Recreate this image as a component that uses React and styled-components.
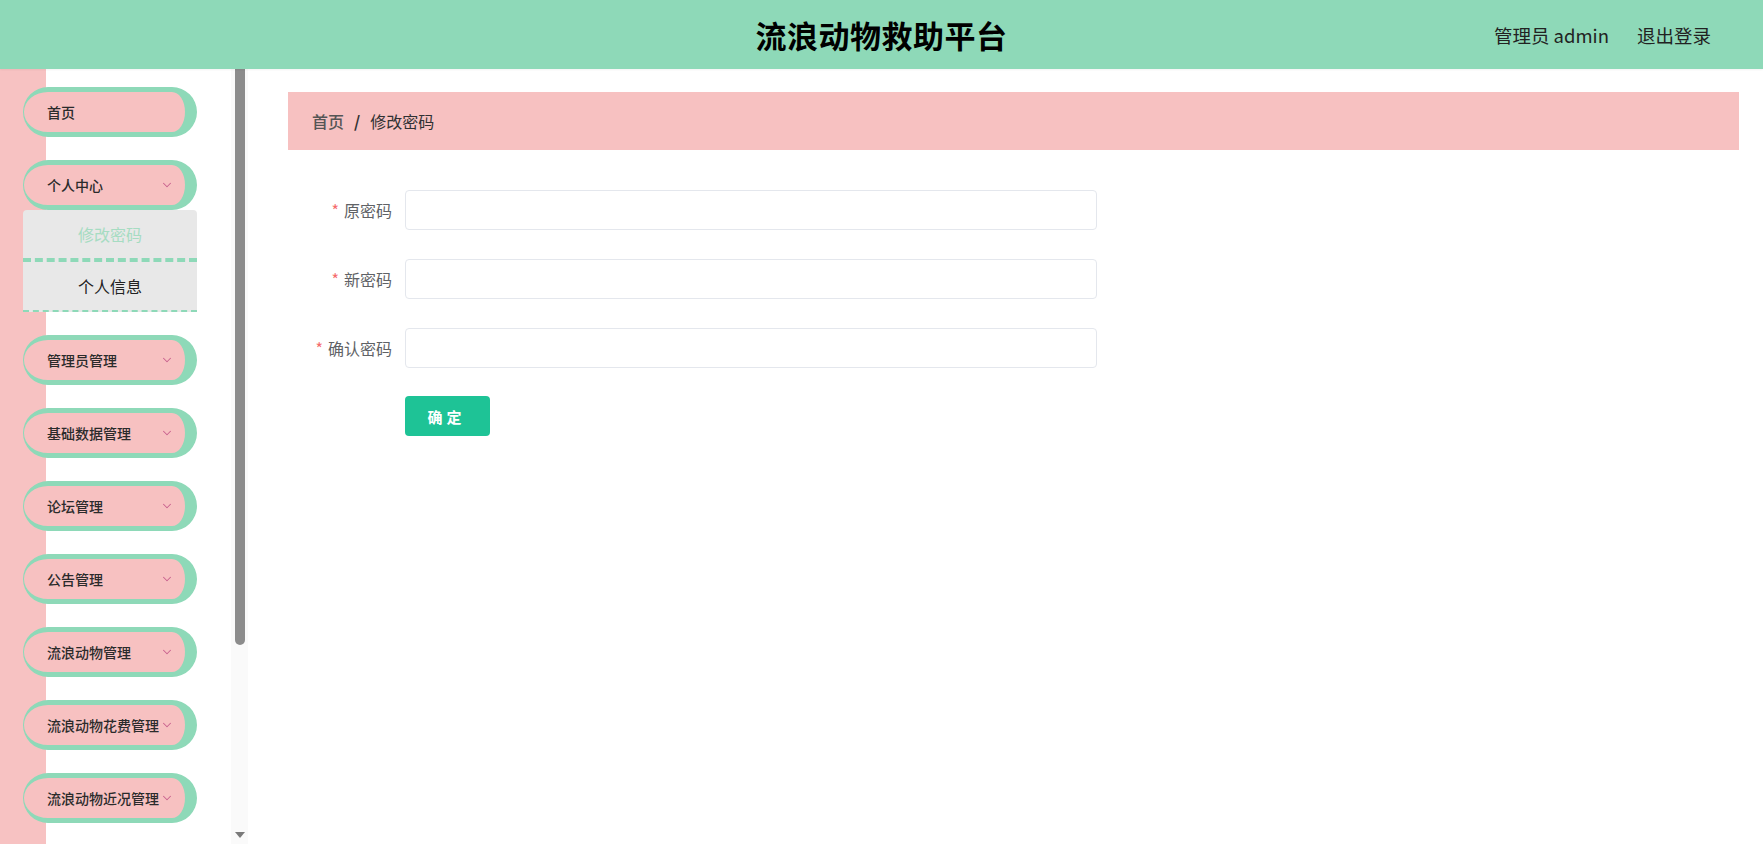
import React from 'react';
import styled, { createGlobalStyle } from 'styled-components';
import { ChevronDown } from 'lucide-react';

const GlobalStyle = createGlobalStyle`
    html, body {
        margin: 0;
        padding: 0;
        height: 100%;
        overflow: hidden;
    }
    body {
        font-family: "Noto Sans CJK SC", "Noto Sans", sans-serif;
        background: #fff;
        color: #303133;
    }
    * {
        box-sizing: border-box;
    }
`;

const Page = styled.div`
    display: flex;
    flex-direction: column;
    height: 100vh;
`;

const Header = styled.header`
    height: 69px;
    flex: 0 0 69px;
    background: #8ed9b8;
    display: flex;
    align-items: center;
    justify-content: center;
    position: relative;
    box-shadow: 0 1px 2px rgba(0, 0, 0, 0.05);
`;

const Title = styled.h1`
    margin: 0;
    font-size: 31px;
    font-weight: 700;
    color: #000;
    letter-spacing: 0.5px;
`;

const UserBox = styled.div`
    position: absolute;
    right: 52px;
    top: 0;
    height: 100%;
    display: flex;
    align-items: center;
    gap: 28px;
    font-size: 18.5px;
    color: #222;
`;

const Body = styled.div`
    flex: 1;
    display: flex;
    min-height: 0;
`;

const Sidebar = styled.aside`
    width: 248px;
    flex: 0 0 248px;
    height: 100%;
    display: flex;
`;

const MenuScroll = styled.div`
    flex: 1;
    height: 100%;
    overflow: hidden;
    background: linear-gradient(to right, #f7c2c2 46px, #fff 46px);
`;

const ScrollTrack = styled.div`
    width: 17px;
    flex: 0 0 17px;
    height: 100%;
    background: #fafafa;
    display: flex;
    flex-direction: column;
    align-items: center;
    padding-bottom: 6px;
`;

const Thumb = styled.div`
    width: 10px;
    height: 576px;
    background: #8c8c8c;
    border-radius: 0 0 5px 5px;
`;

const Spacer = styled.div`
    flex: 1;
`;

const ArrowDown = styled.div`
    width: 0;
    height: 0;
    border-left: 5px solid transparent;
    border-right: 5px solid transparent;
    border-top: 6px solid #7a7a7a;
`;

const Menu = styled.ul`
    list-style: none;
    margin: 0;
    padding: 18px 0 0 23px;
    display: flex;
    flex-direction: column;
    gap: 23px;
`;

const MenuItem = styled.li`
    width: 174px;
`;

const Pill = styled.div`
    height: 50px;
    display: flex;
    align-items: center;
    justify-content: space-between;
    padding: 0 11px 0 23px;
    background: #f7c1c1;
    border: 5px solid #8ed9b8;
    border-left-width: 1px;
    border-right-width: 12px;
    border-radius: 25px;
    font-size: 14px;
    font-weight: 500;
    color: #2b2b2b;
    white-space: nowrap;
    cursor: pointer;
    svg {
        color: #c9638f;
        flex: 0 0 auto;
    }
`;

const SubMenu = styled.div`
    background: #e8e8e8;
    border-radius: 4px 4px 0 0;
`;

const SubItem = styled.div`
    height: ${p => (p.active ? '52px' : '50px')};
    display: flex;
    align-items: center;
    justify-content: center;
    font-size: 16px;
    color: ${p => (p.active ? '#a6dcc2' : '#222')};
    border-bottom: ${p => (p.active ? '4px' : '2px')} dashed #8ed9b8;
    cursor: pointer;
`;

const Main = styled.main`
    flex: 1;
    padding: 23px 24px 0 40px;
    min-width: 0;
`;

const Breadcrumb = styled.div`
    height: 58px;
    background: #f7c1c1;
    display: flex;
    align-items: center;
    padding-left: 24px;
    font-size: 16px;
    color: #303133;
`;

const Crumb = styled.span`
    color: ${p => (p.muted ? '#555' : '#303133')};
    font-weight: ${p => (p.muted ? 500 : 400)};
`;

const Sep = styled.span`
    margin: 0 10px;
    color: #333;
    font-weight: 600;
`;

const Form = styled.form`
    margin-top: 40px;
    display: flex;
    flex-direction: column;
    gap: 29px;
`;

const Row = styled.div`
    display: flex;
    align-items: center;
`;

const Label = styled.label`
    width: 117px;
    padding-right: 13px;
    text-align: right;
    font-size: 16px;
    color: #606266;
    &::before {
        content: '*';
        color: #f56c6c;
        margin-right: 5px;
    }
`;

const Input = styled.input`
    width: 692px;
    height: 40px;
    border: 1px solid #e4e7ed;
    border-radius: 4px;
    padding: 0 14px;
    font-size: 14px;
    outline: none;
    background: #fff;
`;

const ButtonRow = styled.div`
    margin-top: -1px;
`;

const Button = styled.button`
    margin-left: 117px;
    width: 85px;
    height: 40px;
    border: none;
    border-radius: 4px;
    background: #1ec396;
    color: #fff;
    font-family: inherit;
    font-size: 15px;
    font-weight: 700;
    letter-spacing: 4px;
    padding-left: 4px;
    cursor: pointer;
`;

const menus = [
    '管理员管理',
    '基础数据管理',
    '论坛管理',
    '公告管理',
    '流浪动物管理',
    '流浪动物花费管理',
    '流浪动物近况管理',
];

const App = () => {
    return (
        <Page>
            <GlobalStyle />
            <Header>
                <Title>流浪动物救助平台</Title>
                <UserBox>
                    <span>管理员 admin</span>
                    <span>退出登录</span>
                </UserBox>
            </Header>
            <Body>
                <Sidebar>
                    <MenuScroll>
                        <Menu>
                            <MenuItem>
                                <Pill>首页</Pill>
                            </MenuItem>
                            <MenuItem>
                                <Pill>
                                    个人中心
                                    <ChevronDown size={14} strokeWidth={1.8} />
                                </Pill>
                                <SubMenu>
                                    <SubItem active>修改密码</SubItem>
                                    <SubItem>个人信息</SubItem>
                                </SubMenu>
                            </MenuItem>
                            {menus.map(m => (
                                <MenuItem key={m}>
                                    <Pill>
                                        {m}
                                        <ChevronDown size={14} strokeWidth={1.8} />
                                    </Pill>
                                </MenuItem>
                            ))}
                        </Menu>
                    </MenuScroll>
                    <ScrollTrack>
                        <Thumb />
                        <Spacer />
                        <ArrowDown />
                    </ScrollTrack>
                </Sidebar>
                <Main>
                    <Breadcrumb>
                        <Crumb muted>首页</Crumb>
                        <Sep>/</Sep>
                        <Crumb>修改密码</Crumb>
                    </Breadcrumb>
                    <Form onSubmit={e => e.preventDefault()}>
                        <Row>
                            <Label>原密码</Label>
                            <Input type="password" />
                        </Row>
                        <Row>
                            <Label>新密码</Label>
                            <Input type="password" />
                        </Row>
                        <Row>
                            <Label>确认密码</Label>
                            <Input type="password" />
                        </Row>
                        <ButtonRow>
                            <Button type="submit">确定</Button>
                        </ButtonRow>
                    </Form>
                </Main>
            </Body>
        </Page>
    );
};

export default App;
